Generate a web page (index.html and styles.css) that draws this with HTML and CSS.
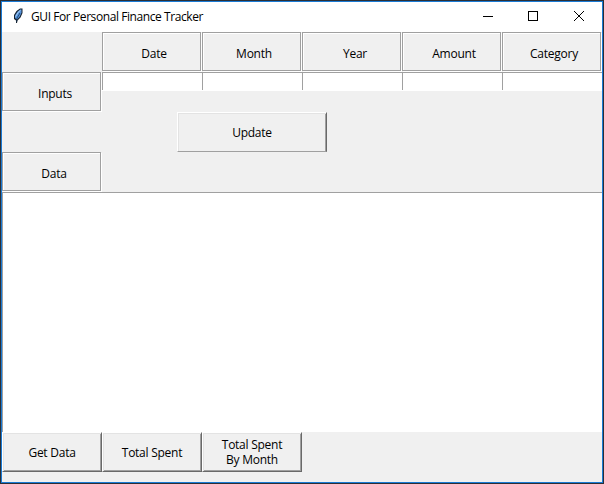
FILE: index.html
```html
<!DOCTYPE html>
<html lang="en">
<head>
<meta charset="utf-8">
<title>GUI For Personal Finance Tracker</title>
<link rel="stylesheet" href="styles.css">
</head>
<body>
<main class="window">
  <header class="titlebar">
    <svg class="feather" width="12" height="16" viewBox="0 0 12 16">
      <path d="M4 15V12.500L2 11V7L4.500 3L8 .5H10.500V5L8.500 9.500L5.500 12.500L5 15Z" fill="#18222e"/>
      <path d="M3 10V7.500L5.500 3.800L8.200 1.500H9.500V4.800L7.500 9L5 11.500Z" fill="#5593dc"/>
      <path d="M3.700 8.500L6 4.500L8.500 2.300" fill="none" stroke="#a9cdf2"/>
      <path d="M4.500 14L5 10L8 5" fill="none" stroke="#14304f" stroke-width=".7"/>
    </svg>
    <h1 class="title">GUI For Personal Finance Tracker</h1>
    <svg class="controls" width="138" height="30" viewBox="0 0 138 30" shape-rendering="crispEdges">
      <path d="M19 14.500h10" stroke="#000"/>
      <rect x="64.500" y="9.500" width="9" height="9" fill="none" stroke="#000"/>
      <path d="M110 9l10 10M120 9l-10 10" stroke="#000" shape-rendering="auto"/>
    </svg>
  </header>
  <section class="grid">
    <div></div>
    <div class="label">Date</div>
    <div class="label">Month</div>
    <div class="label nudged">Year</div>
    <div class="label">Amount</div>
    <div class="label">Category</div>
    <div class="label nudged">Inputs</div>
    <div class="entry"></div>
    <div class="entry"></div>
    <div class="entry"></div>
    <div class="entry"></div>
    <div class="entry"></div>
    <div class="update-row"><button class="button update">Update</button></div>
    <div class="label data">Data</div>
  </section>
  <section class="output"></section>
  <footer class="actions">
    <button class="button">Get Data</button>
    <button class="button">Total Spent</button>
    <button class="button">Total Spent<br>By Month</button>
  </footer>
</main>
</body>
</html>
```
FILE: styles.css
```css
* { box-sizing: border-box; }
body {
  margin: 0;
  padding: 1px;
  width: 604px;
  height: 484px;
  overflow: hidden;
  background: #2b2f36;
  color: #000;
  font: 12px/15px "Open Sans", "Noto Sans", sans-serif;
}
.window {
  width: 602px;
  height: 482px;
  border: 1px solid #1a7ad4;
  background: #f0f0f0;
}
.titlebar {
  display: flex;
  height: 30px;
  background: #fff;
}
.feather { margin: 6px 0 0 10px; }
.title {
  flex: 1;
  margin: 7px 0 0 7px;
  font-size: 12px;
  font-weight: 400;
  letter-spacing: -0.42px;
  white-space: nowrap;
}
.grid {
  display: grid;
  grid-template-columns: repeat(6, 100px);
  grid-template-rows: 40px 40px 40px 40px;
}
.label {
  display: flex;
  align-items: center;
  justify-content: center;
  width: 99px;
  height: 39px;
  padding: 3px 0 0 5px;
  border: 1px solid #a0a0a0;
  box-shadow: 1px 1px #fff, inset 1px 1px #fff;
  letter-spacing: -0.25px;
}
.nudged { padding-left: 7px; }
.entry {
  height: 18px;
  border-top: 1px solid #a0a0a0;
  border-left: 1px solid #a0a0a0;
  background: #fff;
  box-shadow: 0 1px #fff;
}
.update-row {
  grid-column: 2 / 7;
  grid-row: 3;
  padding-left: 75px;
}
.data { grid-row: 4; }
.button {
  width: 100px;
  height: 40px;
  padding: 0;
  border: 1px solid;
  border-color: #fff #696969 #696969 #fff;
  border-radius: 0;
  background: #f0f0f0;
  box-shadow: inset 1px 1px #e3e3e3, inset -1px -1px #a0a0a0;
  color: #000;
  font: inherit;
  letter-spacing: -0.25px;
}
.update {
  display: block;
  width: 150px;
  border-bottom-color: #a0a0a0;
  box-shadow: inset 1px 1px #e3e3e3, inset -1px 0 #a0a0a0;
}
.output {
  height: 240px;
  border-top: 1px solid #a0a0a0;
  border-left: 1px solid #a0a0a0;
  background: #fff;
}
.actions { display: flex; }
```
